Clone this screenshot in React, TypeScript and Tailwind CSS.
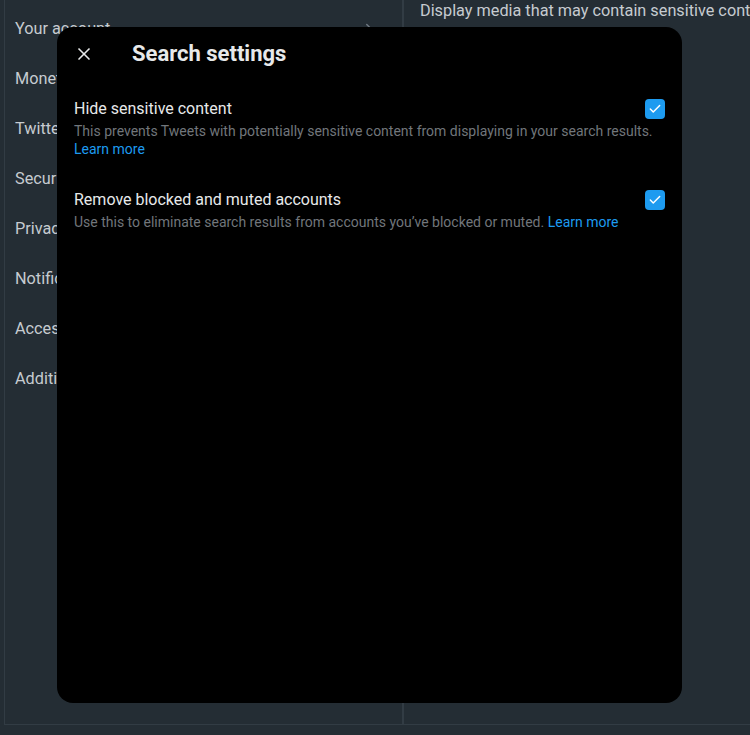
import { X, ChevronRight, Check } from 'lucide-react';

const menu = [
  'Your account',
  'Monetization',
  'Twitter Blue',
  'Security and account access',
  'Privacy and safety',
  'Notifications',
  'Accessibility, display, and languages',
  'Additional resources',
];

const settings = [
  {
    title: 'Hide sensitive content',
    desc: 'This prevents Tweets with potentially sensitive content from displaying in your search results.',
    linkBreak: true,
  },
  {
    title: 'Remove blocked and muted accounts',
    desc: 'Use this to eliminate search results from accounts you’ve blocked or muted.',
    linkBreak: false,
  },
];

export default function App() {
  return (
    <div
      className="relative w-[750px] h-[735px] overflow-hidden bg-[#242d34] text-[#c6cbd0]"
      style={{ fontFamily: '"Segoe UI", Roboto, "Noto Sans", sans-serif' }}
    >
      {/* Settings page behind the modal */}
      <div className="flex h-[725px] border-l border-b border-[#323c44] ml-[4px]">
        <div className="w-[399px] shrink-0 border-r-2 border-[#323c44] pt-[4px]">
          {menu.map((item) => (
            <div key={item} className="flex items-center justify-between h-[50px] pl-[10px] pr-[24px] text-[16.25px]">
              <span className="whitespace-nowrap">{item}</span>
              <ChevronRight className="w-[18px] h-[18px] text-[#6f7880]" />
            </div>
          ))}
        </div>
        <div className="flex-1 min-w-0 pl-[16px]">
          <p className="text-[16.25px] whitespace-nowrap leading-[22px]">
            Display media that may contain sensitive content
          </p>
        </div>
      </div>

      {/* Search settings modal */}
      <div className="absolute left-[57px] top-[27px] w-[625px] h-[676px] bg-black rounded-[16px] text-[#e7e9ea]">
        <div className="flex items-center h-[54px] px-[16px]">
          <button className="w-[22px] h-[22px] flex items-center justify-center">
            <X className="w-[20px] h-[20px] text-[#e7e9ea]" strokeWidth={2} />
          </button>
          <h2 className="ml-[37px] text-[22px] font-bold leading-[26px]">Search settings</h2>
        </div>

        <div className="flex flex-col gap-[32px] pt-[18px] px-[17px]">
          {settings.map((s) => (
            <div key={s.title} className="flex items-start justify-between">
              <div className="flex-1 min-w-0">
                <div className="text-[16px] leading-[20px]">{s.title}</div>
                <p className="mt-[3px] text-[14px] leading-[18px] text-[#71767b] whitespace-nowrap">
                  {s.desc}
                  {s.linkBreak ? <br /> : ' '}
                  <span className="text-[#1d9bf0]">Learn more</span>
                </p>
              </div>
              <div className="w-[20px] h-[20px] rounded-[4px] bg-[#1d9bf0] flex items-center justify-center shrink-0">
                <Check className="w-[14px] h-[14px] text-white" strokeWidth={2.5} />
              </div>
            </div>
          ))}
        </div>
      </div>
    </div>
  );
}
